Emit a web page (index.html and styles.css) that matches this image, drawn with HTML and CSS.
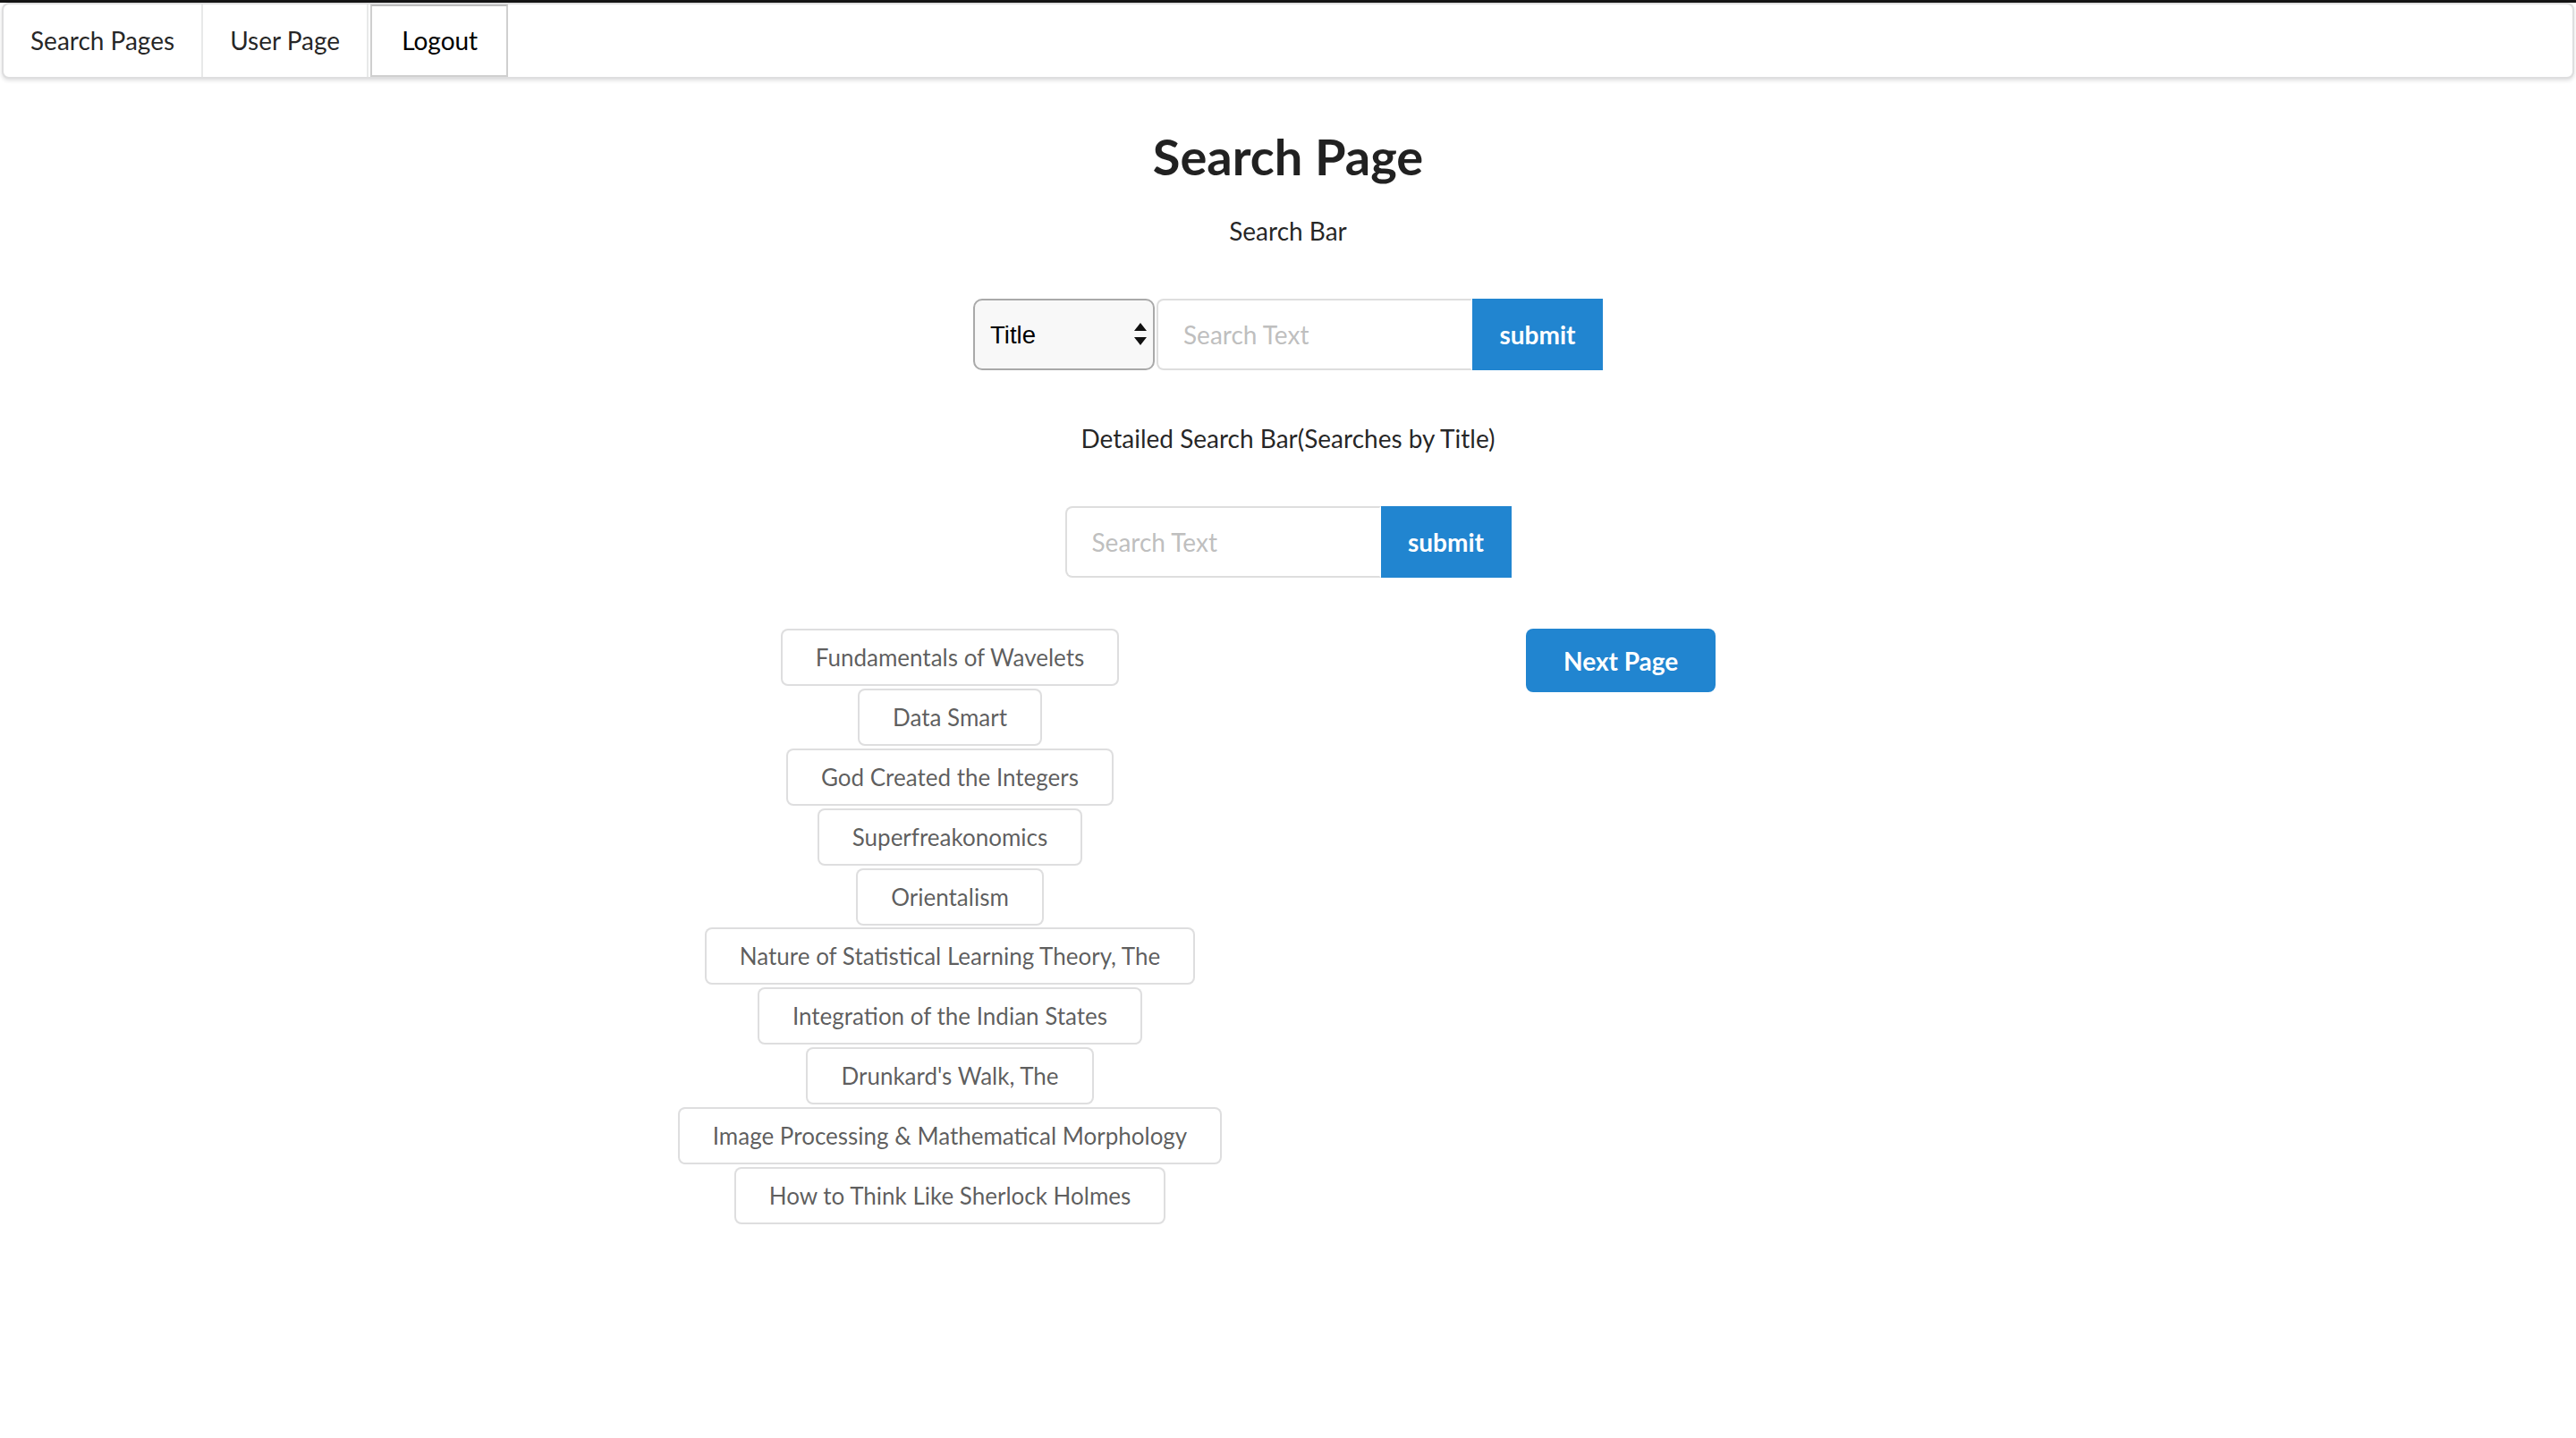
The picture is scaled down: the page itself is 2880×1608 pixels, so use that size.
FILE: index.html
```html
<!DOCTYPE html>
<html lang="en">
<head>
<meta charset="utf-8">
<title>Search Page</title>
<link rel="stylesheet" href="styles.css">
</head>
<body>
<div class="topline"></div>
<nav class="menu">
  <a class="menu-item">Search Pages</a>
  <a class="menu-item">User Page</a>
  <a class="menu-item logout">Logout</a>
</nav>
<main class="page">
  <h1 class="title">Search Page</h1>
  <p class="label label-first">Search Bar</p>
  <form class="search-row">
    <div class="select-wrap">
      <select class="select"><option>Title</option></select>
      <svg class="select-arrows" width="14" height="25" viewBox="0 0 14 25" aria-hidden="true"><path d="M7 0 L14 9 L0 9 Z M0 16 L14 16 L7 25 Z" fill="#111"/></svg>
    </div>
    <div class="action-input">
      <input class="text-input" type="text" placeholder="Search Text">
      <button class="submit" type="button">submit</button>
    </div>
  </form>
  <p class="label label-second">Detailed Search Bar(Searches by Title)</p>
  <form class="search-row">
    <div class="action-input">
      <input class="text-input" type="text" placeholder="Search Text">
      <button class="submit" type="button">submit</button>
    </div>
  </form>
  <section class="results">
    <div class="book-list">
      <div class="book">Fundamentals of Wavelets</div>
      <div class="book">Data Smart</div>
      <div class="book">God Created the Integers</div>
      <div class="book">Superfreakonomics</div>
      <div class="book">Orientalism</div>
      <div class="book">Nature of Statistical Learning Theory, The</div>
      <div class="book">Integration of the Indian States</div>
      <div class="book">Drunkard's Walk, The</div>
      <div class="book">Image Processing &amp; Mathematical Morphology</div>
      <div class="book">How to Think Like Sherlock Holmes</div>
    </div>
    <div class="pager">
      <button class="next" type="button">Next Page</button>
    </div>
  </section>
</main>
</body>
</html>
```

FILE: styles.css
```css
* { box-sizing: border-box; }

html, body {
  margin: 0;
  padding: 0;
  background: #ffffff;
}

body {
  font-family: Lato, "Helvetica Neue", Arial, Helvetica, sans-serif;
  font-size: 28px;
  color: rgba(0, 0, 0, 0.87);
}

.topline {
  height: 3px;
  background: #141414;
}

.menu {
  display: flex;
  margin: 0 2px;
  border: 2px solid rgba(34, 36, 38, 0.15);
  border-radius: 8px;
  box-shadow: 0 2px 4px 0 rgba(34, 36, 38, 0.15);
  background: #ffffff;
}

.menu-item {
  display: block;
  padding: 26px 30px 27px;
  line-height: 28px;
  font-size: 28px;
  color: rgba(0, 0, 0, 0.87);
  border-right: 2px solid rgba(34, 36, 38, 0.1);
}

.menu-item.logout {
  color: #000;
  border: 2px solid #cfcfcf;
  border-top-color: #bdbdbd;
  padding: 24px 32px 25px 33px;
  margin-left: 2px;
  background: #fff;
}

.page {
  display: flex;
  flex-direction: column;
  align-items: center;
}

.title {
  margin: 51px 0 0;
  font-size: 56px;
  line-height: 72px;
  font-weight: 700;
  color: rgba(0, 0, 0, 0.87);
}

.label {
  margin: 0;
  font-size: 28px;
  line-height: 40px;
}

.label-first { margin-top: 27px; }
.label-second { margin-top: 56px; }

.search-row {
  display: flex;
  gap: 2px;
  margin-top: 56px;
}

.select-wrap {
  position: relative;
  width: 203px;
  height: 80px;
}

.select {
  appearance: none;
  -webkit-appearance: none;
  width: 100%;
  height: 100%;
  margin: 0;
  padding: 0 30px 0 17px;
  border: 2px solid #a9a9a9;
  border-radius: 10px;
  background: #f8f8f8;
  font-family: "Liberation Sans", Arial, sans-serif;
  font-size: 27.5px;
  color: #000;
}

.select-arrows {
  position: absolute;
  right: 9px;
  top: 27px;
  pointer-events: none;
}

.action-input {
  display: flex;
  height: 80px;
}

.text-input {
  width: 353px;
  height: 80px;
  margin: 0;
  padding: 0 28px;
  border: 2px solid rgba(34, 36, 38, 0.15);
  border-right-color: transparent;
  border-radius: 8px 0 0 8px;
  font-family: Lato, "Helvetica Neue", Arial, sans-serif;
  font-size: 28px;
  color: rgba(0, 0, 0, 0.87);
  outline: none;
}

.text-input::placeholder {
  color: rgba(180, 180, 180, 0.87);
}

.submit {
  width: 146px;
  height: 80px;
  margin: 0;
  padding: 0;
  border: none;
  border-radius: 0;
  background: #2185d0;
  color: #fff;
  font-family: Lato, "Helvetica Neue", Arial, sans-serif;
  font-size: 28px;
  font-weight: 700;
}

.results {
  display: grid;
  grid-template-columns: 756px 756px;
  justify-content: center;
  align-items: start;
  width: 100%;
  margin-top: 57px;
}

.book-list {
  display: flex;
  flex-direction: column;
  align-items: center;
  gap: 2.9px;
}

.book {
  padding: 13px 37px;
  line-height: 34px;
  font-size: 26px;
  color: rgba(0, 0, 0, 0.65);
  border: 2px solid rgba(34, 36, 38, 0.15);
  border-radius: 8px;
  background: #fff;
  white-space: nowrap;
}

.pager {
  padding-left: 266px;
}

.next {
  height: 71px;
  padding: 0 42px;
  border: none;
  border-radius: 8px;
  background: #2185d0;
  color: #fff;
  font-family: Lato, "Helvetica Neue", Arial, sans-serif;
  font-size: 28px;
  font-weight: 700;
}
```
